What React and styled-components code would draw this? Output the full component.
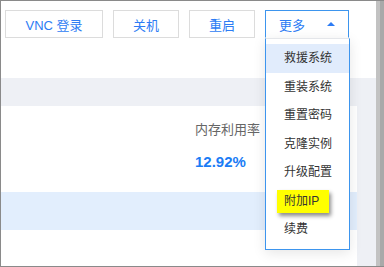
import styled, { createGlobalStyle } from 'styled-components';

const GlobalStyle = createGlobalStyle`
  body {
    margin: 0;
    font-family: "Liberation Sans", "Noto Sans CJK SC", sans-serif;
  }
`;

const Frame = styled.div`
  width: 384px;
  height: 267px;
  box-sizing: border-box;
  border: 1px solid #8a8a8a;
  border-right: none;
  display: flex;
  overflow: hidden;
  background: #fff;
`;

const Main = styled.div`
  flex: 1;
  display: flex;
  flex-direction: column;
`;

const Scrollbar = styled.div`
  width: 4px;
  border-left: 4px solid #c2c2c2;
  background: #a9a9a9;
`;

const Toolbar = styled.div`
  height: 77px;
  box-sizing: border-box;
  padding: 9px 0 0 4px;
  display: flex;
  gap: 10px;
  align-items: flex-start;
  background: #fff;
  position: relative;
  z-index: 2;
`;

const Button = styled.div`
  position: relative;
  width: ${p => p.$w}px;
  height: 28px;
  box-sizing: border-box;
  border: 1px solid ${p => (p.$open ? '#3d95ee' : '#dcdcdc')};
  border-bottom-color: ${p => (p.$open ? '#fff' : '#dcdcdc')};
  display: flex;
  align-items: center;
  justify-content: ${p => (p.$open ? 'flex-start' : 'center')};
  padding: ${p => (p.$open ? '0 13px 0 13px' : '0')};
  color: #2d7cf4;
  font-size: 13px;
  background: #fff;
`;

const Arrow = styled.span`
  margin-left: auto;
  width: 0;
  height: 0;
  border-left: 4px solid transparent;
  border-right: 4px solid transparent;
  border-bottom: 4px solid #2d7cf4;
  margin-bottom: 1px;
`;

const Menu = styled.ul`
  position: absolute;
  top: 27px;
  left: -1px;
  width: 85px;
  box-sizing: border-box;
  margin: 0;
  padding: 5px 0;
  list-style: none;
  background: #fff;
  border: 1px solid #3d95ee;
  border-top-color: #e4e6ea;
  box-shadow: 0 3px 12px rgba(0, 0, 0, 0.1);
`;

const MenuItem = styled.li`
  height: 28.5px;
  line-height: 28.5px;
  padding-left: 18px;
  font-size: 12px;
  color: #333;
  background: ${p => (p.$active ? '#e1ecfc' : 'transparent')};
`;

const Marked = styled.span`
  display: inline-block;
  height: 23px;
  line-height: 23px;
  margin-left: -7px;
  padding: 0 10px 0 7px;
  background: #ffff00;
  box-shadow: 2px 3px 4px rgba(0, 0, 0, 0.45);
`;

const Band = styled.div`
  height: 28px;
  background: #eef0f5;
`;

const Body = styled.div`
  flex: 1;
  display: flex;
  background: #eef0f5;
`;

const Card = styled.div`
  width: 356px;
  display: flex;
  flex-direction: column;
  background: #fff;
`;

const StatRow = styled.div`
  height: 86px;
  box-sizing: border-box;
  padding: 15px 0 0 194px;
`;

const StatLabel = styled.div`
  font-size: 13px;
  line-height: 18px;
  color: #666;
`;

const StatValue = styled.div`
  margin-top: 13px;
  font-size: 15px;
  line-height: 20px;
  font-weight: bold;
  color: #1b7cf5;
`;

const HighlightRow = styled.div`
  height: 38px;
  background: #e2eefd;
`;

const menuItems = ['救援系统', '重装系统', '重置密码', '克隆实例', '升级配置', '附加IP', '续费'];

export default function App() {
  return (
    <>
      <GlobalStyle />
      <Frame>
        <Main>
          <Toolbar>
            <Button $w={98}>VNC 登录</Button>
            <Button $w={66}>关机</Button>
            <Button $w={66}>重启</Button>
            <Button $w={84} $open>
              更多
              <Arrow />
              <Menu>
                {menuItems.map((item, i) => (
                  <MenuItem key={item} $active={i === 0}>
                    {item === '附加IP' ? <Marked>{item}</Marked> : item}
                  </MenuItem>
                ))}
              </Menu>
            </Button>
          </Toolbar>
          <Band />
          <Body>
            <Card>
              <StatRow>
                <StatLabel>内存利用率</StatLabel>
                <StatValue>12.92%</StatValue>
              </StatRow>
              <HighlightRow />
            </Card>
          </Body>
        </Main>
        <Scrollbar />
      </Frame>
    </>
  );
}
